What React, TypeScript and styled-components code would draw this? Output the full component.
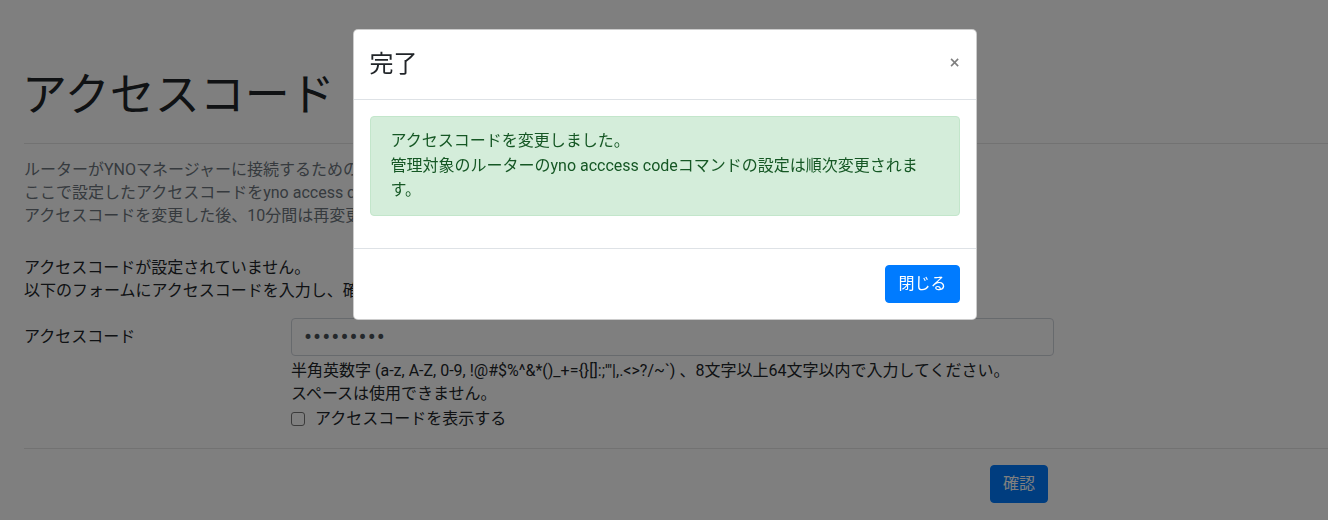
import React from "react";
import styled, { createGlobalStyle } from "styled-components";

const GlobalStyle = createGlobalStyle`
  html, body {
    margin: 0;
    padding: 0;
    background: #fff;
    overflow: hidden;
  }
  body {
    font-family: Roboto, "Noto Sans CJK JP", sans-serif;
    font-size: 16px;
    line-height: 23px;
    color: #212529;
  }
  * {
    box-sizing: border-box;
  }
`;

const Page = styled.main`
  padding: 69px 0 40px 24px;
  min-height: 520px;
`;

const Title = styled.h1`
  margin: 0 0 0 -2px;
  font-size: 45px;
  font-weight: 400;
  line-height: 54px;
`;

const Divider = styled.hr<{ $gap: number }>`
  margin: ${(p) => p.$gap}px 0 0;
  border: 0;
  border-top: 1px solid rgba(0, 0, 0, 0.1);
`;

const Text = styled.p<{ $muted?: boolean; $top: number }>`
  margin: ${(p) => p.$top}px 0 0;
  color: ${(p) => (p.$muted ? "#6c757d" : "#212529")};
`;

const FormRow = styled.div`
  display: grid;
  grid-template-columns: 267px 763px;
  margin-top: 16px;
`;

const FieldLabel = styled.label`
  padding-top: 7px;
`;

const PasswordInput = styled.input`
  display: block;
  width: 100%;
  height: 38px;
  padding: 0 12px;
  border: 1px solid #ced4da;
  border-radius: 4px;
  background: #fff;
  font-family: Roboto, sans-serif;
  font-size: 24px;
  letter-spacing: 1px;
  color: #495057;
`;

const HelpText = styled.div`
  margin-top: 3px;
  white-space: nowrap;
`;

const CheckRow = styled.label`
  display: flex;
  align-items: center;
  gap: 10px;
  margin-top: 2px;
`;

const CheckBox = styled.span`
  flex-shrink: 0;
  width: 14px;
  height: 14px;
  border: 1px solid #767676;
  border-radius: 3px;
  background: #fff;
`;

const Actions = styled.div`
  display: flex;
  justify-content: flex-end;
  max-width: 1024px;
  margin-top: 16px;
`;

const Button = styled.button<{ $spaced?: boolean }>`
  margin: ${(p) => (p.$spaced ? "4px" : "0")};
  padding: 6px 12px;
  border: 1px solid #007bff;
  border-radius: 4px;
  background: #007bff;
  color: #fff;
  font-family: inherit;
  font-size: 16px;
  line-height: 24px;
  cursor: pointer;
`;

const Backdrop = styled.div`
  position: fixed;
  inset: 0;
  display: flex;
  justify-content: center;
  align-items: flex-start;
  padding: 29px 0 0 1px;
  background: rgba(0, 0, 0, 0.5);
`;

const Dialog = styled.div`
  width: 624px;
  background: #fff;
  border: 1px solid rgba(0, 0, 0, 0.2);
  border-radius: 5px;
`;

const DialogHeader = styled.div`
  display: flex;
  justify-content: space-between;
  align-items: flex-start;
  padding: 16px;
  border-bottom: 1px solid #dee2e6;
`;

const DialogTitle = styled.h5`
  margin: 0;
  font-size: 24px;
  font-weight: 400;
  line-height: 37px;
`;

const CloseButton = styled.button`
  margin: 0 -1px 0 0;
  padding: 0;
  border: 0;
  background: transparent;
  color: #000;
  opacity: 0.5;
  font-family: "DejaVu Sans", sans-serif;
  font-size: 14px;
  font-weight: 700;
  line-height: 33px;
  cursor: pointer;
`;

const DialogBody = styled.div`
  padding: 16px;
`;

const Alert = styled.div`
  margin-bottom: 16px;
  padding: 12px 20px;
  border: 1px solid #c3e6cb;
  border-radius: 4px;
  background: #d4edda;
  color: #155724;
  line-height: 24.5px;
`;

const DialogFooter = styled.div`
  display: flex;
  justify-content: flex-end;
  padding: 12px;
  border-top: 1px solid #dee2e6;
`;

const App = () => (
  <>
    <GlobalStyle />
    <Page>
      <Title>アクセスコード</Title>
      <Divider $gap={20} />
      <Text $muted $top={14}>
        ルーターがYNOマネージャーに接続するためのアクセスコードを設定します。
        <br />
        ここで設定したアクセスコードをyno access codeコマンドで設定します。
        <br />
        アクセスコードを変更した後、10分間は再変更できません。
      </Text>
      <Text $top={29}>
        アクセスコードが設定されていません。
        <br />
        以下のフォームにアクセスコードを入力し、確認ボタンを押してください。
      </Text>
      <FormRow>
        <FieldLabel htmlFor="access-code">アクセスコード</FieldLabel>
        <div>
          <PasswordInput id="access-code" type="password" defaultValue="abcd1234!" />
          <HelpText>
            半角英数字 (a-z, A-Z, 0-9, !@#$%^&amp;*()_+={"{}"}[]:;'"|,.&lt;&gt;?/~`) 、8文字以上64文字以内で入力してください。
            <br />
            スペースは使用できません。
          </HelpText>
          <CheckRow>
            <CheckBox />
            アクセスコードを表示する
          </CheckRow>
        </div>
      </FormRow>
      <Divider $gap={18} />
      <Actions>
        <Button type="button">確認</Button>
      </Actions>
    </Page>
    <Backdrop>
      <Dialog role="dialog">
        <DialogHeader>
          <DialogTitle>完了</DialogTitle>
          <CloseButton type="button" aria-label="Close">
            ×
          </CloseButton>
        </DialogHeader>
        <DialogBody>
          <Alert>
            アクセスコードを変更しました。
            <br />
            管理対象のルーターのyno acccess codeコマンドの設定は順次変更されます。
          </Alert>
        </DialogBody>
        <DialogFooter>
          <Button type="button" $spaced>
            閉じる
          </Button>
        </DialogFooter>
      </Dialog>
    </Backdrop>
  </>
);

export default App;
